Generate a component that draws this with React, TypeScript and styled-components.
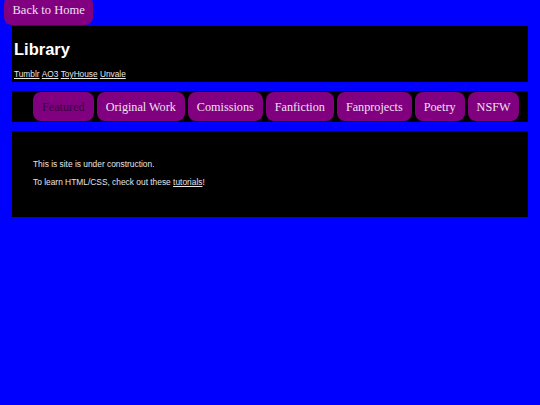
import { createGlobalStyle, styled } from 'styled-components';

const GlobalStyle = createGlobalStyle`
    html, body {
        margin: 0;
        padding: 0;
        background: #0000ff;
    }
    body {
        font-family: "Liberation Sans", Arial, sans-serif;
        color: #ffffff;
    }
`;

const Page = styled.div`
    display: flex;
    flex-direction: column;
    align-items: stretch;
    padding: 0 12px;
`;

const HomeButton = styled.a`
    align-self: flex-start;
    margin: -4px 0 1px -8px;
    padding: 7px 8.5px 8px;
    background: #800080;
    border-radius: 8px;
    font-family: "Liberation Serif", "Times New Roman", serif;
    font-size: 12.5px;
    line-height: 14px;
    color: #f0e0f0;
    text-decoration: none;
`;

const Header = styled.header`
    background: #000000;
    padding: 14px 2px 3px;
`;

const Title = styled.h1`
    margin: 0 0 10px;
    font-size: 16.5px;
    line-height: 19px;
    font-weight: bold;
    color: #ffffff;
`;

const LinkRow = styled.div`
    display: flex;
    gap: 2.3px;
    font-size: 8.3px;
    line-height: 10px;
`;

const SmallLink = styled.a`
    color: #e8e8e8;
    text-decoration: underline;
`;

const Nav = styled.nav`
    margin-top: 9px;
    background: #000000;
    padding: 1px 8px 1px 21px;
    display: flex;
    gap: 3px;
`;

const NavButton = styled.a<{ $active?: boolean }>`
    padding: 7.5px 9px;
    background: #800080;
    border-radius: 8px;
    font-family: "Liberation Serif", "Times New Roman", serif;
    font-size: 12.2px;
    line-height: 14px;
    color: ${(p) => (p.$active ? '#3a0040' : '#f0e0f0')};
    text-decoration: none;
    white-space: nowrap;
`;

const Content = styled.main`
    margin-top: 9px;
    background: #000000;
    padding: 20px 21px 22px;
    font-size: 8.4px;
    line-height: 10px;
    color: #e6e6e6;
`;

const Para = styled.p`
    margin: 8px 0;
`;

const InlineLink = styled.a`
    color: #e6e6e6;
    text-decoration: underline;
`;

const tabs = ['Featured', 'Original Work', 'Comissions', 'Fanfiction', 'Fanprojects', 'Poetry', 'NSFW'];
const links = ['Tumblr', 'AO3', 'ToyHouse', 'Unvale'];

export default function App() {
    return (
        <>
            <GlobalStyle />
            <Page>
                <HomeButton href="#">Back to Home</HomeButton>
                <Header>
                    <Title>Library</Title>
                    <LinkRow>
                        {links.map((l) => (
                            <SmallLink key={l} href="#">
                                {l}
                            </SmallLink>
                        ))}
                    </LinkRow>
                </Header>
                <Nav>
                    {tabs.map((t, i) => (
                        <NavButton key={t} href="#" $active={i === 0}>
                            {t}
                        </NavButton>
                    ))}
                </Nav>
                <Content>
                    <Para>This is site is under construction.</Para>
                    <Para>
                        To learn HTML/CSS, check out these <InlineLink href="#">tutorials</InlineLink>!
                    </Para>
                </Content>
            </Page>
        </>
    );
}
